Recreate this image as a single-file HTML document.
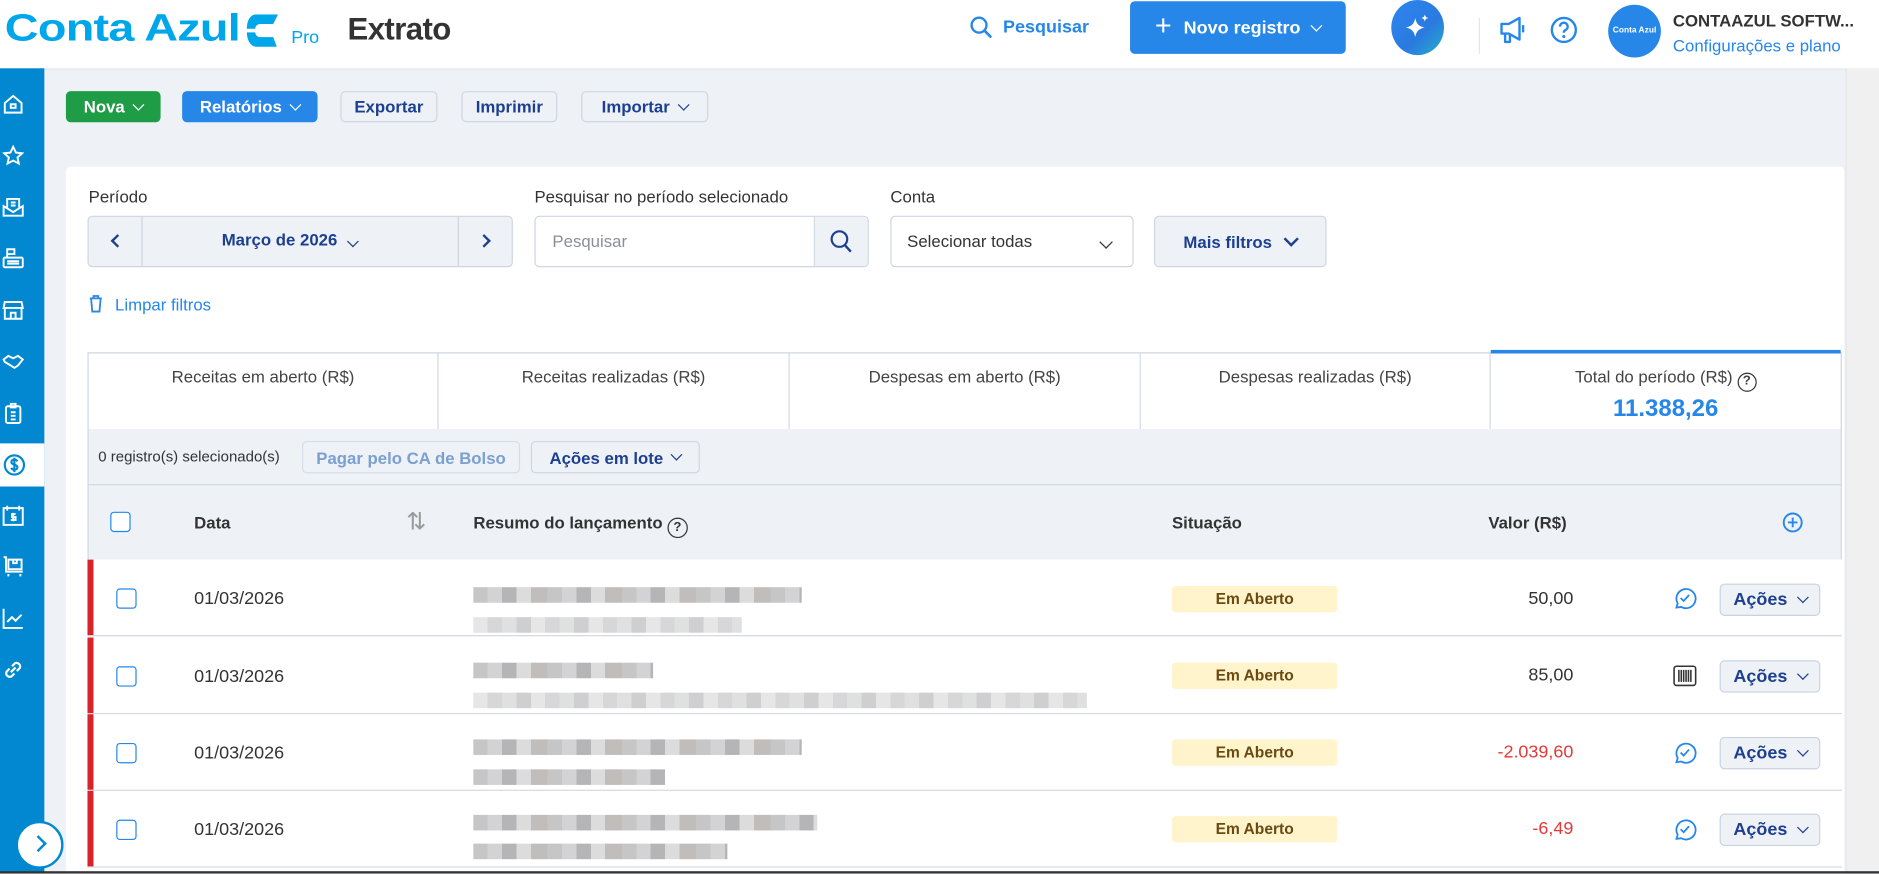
<!DOCTYPE html>
<html><head><meta charset="utf-8"><style>
*{box-sizing:border-box;margin:0;padding:0}
html,body{width:1879px;height:873px;overflow:hidden;background:#eef2f7}
#s{position:absolute;left:0;top:0;width:1568px;height:729px;transform:scale(1.19834);transform-origin:0 0;font-family:"Liberation Sans",sans-serif;background:#eef2f7;color:#333;overflow:hidden}
.a{position:absolute}
.btn{position:absolute;height:26px;border-radius:4px;font-size:14px;font-weight:bold;display:flex;align-items:center;justify-content:center;gap:8px}
.ol{border:1px solid #cfd6e0;background:#eef2f7;color:#1d3f8f}
.chev{display:inline-block;width:7px;height:7px;border-right:1.6px solid currentColor;border-bottom:1.6px solid currentColor;transform:rotate(45deg);margin-top:-4px}
.lbl{font-size:14px;color:#333}
.cb{position:absolute;width:17px;height:17px;border:1.5px solid #2687e9;border-radius:3px;background:#fff}
.row{position:absolute;left:73px;width:1464px;height:64px;background:#fff;border-bottom:1px solid #d0d8e2}
.row .bar{position:absolute;left:0;top:0;width:5px;height:100%;background:#d8232a}
.row .dt{position:absolute;left:89px;top:24px;font-size:15px;color:#333}
.badge{position:absolute;left:905px;width:138px;height:22px;background:#fff4cc;border-radius:3px;font-size:13px;font-weight:bold;color:#6b4a12;text-align:center;line-height:22px}
.val{position:absolute;right:224px;font-size:15px;color:#333}
.acoes{position:absolute;left:1362px;width:84px;height:27px;border:1px solid #c9d3e0;background:#eef2f7;border-radius:4px;color:#1d3f8f;font-size:15px;font-weight:bold;display:flex;align-items:center;justify-content:center;gap:9px}
.blur{position:absolute;height:13px;background:repeating-linear-gradient(90deg,#c6c6c6 0 12px,#d3d3d5 12px 24px,#b5b5b8 24px 36px,#dcdcdc 36px 48px,#c0bdbb 48px 62px)}
.blur.l{background:repeating-linear-gradient(90deg,#e6e6e6 0 12px,#d7d7d9 12px 24px,#dfe0e0 24px 36px,#cfcfd2 36px 48px)}
.sum{position:absolute;top:295px;height:63px;width:292px;border-right:1px solid #d0d8e2;text-align:center;font-size:14px;color:#444;padding-top:11px;background:#fff}
.sb svg{position:absolute;left:2px}
</style></head><body><div id="s">
<!-- header -->
<div class="a" style="left:0;top:0;width:1568px;height:57px;background:#fff;box-shadow:0 1px 2px rgba(0,0,0,.06)"></div>
<div class="a" style="left:4px;top:5px;font-size:32px;font-weight:bold;color:#00a6ea;letter-spacing:-0.5px;transform:scaleX(1.22);transform-origin:0 0">Conta Azul</div>
<svg class="a" style="left:204px;top:12px" width="32" height="28" viewBox="0 0 32 28"><path d="M10 0h18l-4 8H13a4 4 0 0 0-4 4v0H2C2 5 5 0 10 0z" fill="#00a6ea"/><path d="M2 15h7a4 4 0 0 0 4 4h11l3 8H10C5 27 2 21 2 15z" fill="#00a6ea"/></svg>
<div class="a" style="left:243px;top:23px;font-size:15px;color:#00a6ea">Pro</div>
<div class="a" style="left:290px;top:9px;font-size:26px;color:#333;font-weight:bold;letter-spacing:-.5px">Extrato</div>
<svg class="a" style="left:809px;top:13px" width="20" height="20" viewBox="0 0 20 20"><circle cx="8" cy="8" r="6.2" fill="none" stroke="#2687e9" stroke-width="2"/><path d="M12.5 12.5l5 5" stroke="#2687e9" stroke-width="2.2" stroke-linecap="round"/></svg>
<div class="a" style="left:837px;top:14px;font-size:15px;font-weight:bold;color:#2687e9">Pesquisar</div>
<div class="btn" style="left:943px;top:1px;width:180px;height:44px;background:#2687e9;color:#fff;font-size:15px;gap:10px"><span style="font-size:24px;font-weight:normal;margin-top:-3px">+</span>Novo registro <span class="chev"></span></div>
<div class="a" style="left:1161px;top:0;width:44px;height:46px;border-radius:50%;background:linear-gradient(135deg,#2d86ee,#2a7ae0 60%,#27b0c8)"></div>
<svg class="a" style="left:1170px;top:10px" width="26" height="26" viewBox="0 0 26 26"><path d="M11 5c1 5 3 7 8 8-5 1-7 3-8 8-1-5-3-7-8-8 5-1 7-3 8-8z" fill="#fff"/><path d="M19 2c.5 2 1 2.5 3 3-2 .5-2.5 1-3 3-.5-2-1-2.5-3-3 2-.5 2.5-1 3-3z" fill="#fff"/></svg>
<div class="a" style="left:1234px;top:15px;width:1px;height:30px;background:#e2e6ec"></div>
<svg class="a" style="left:1250px;top:13px" width="26" height="24" viewBox="0 0 26 24"><path d="M3 7h6l9-5v18l-9-5H3z M6 15v7h4v-7" fill="none" stroke="#2687e9" stroke-width="2" stroke-linejoin="round"/><path d="M21 8v6" stroke="#2687e9" stroke-width="2"/></svg>
<svg class="a" style="left:1293px;top:13px" width="24" height="24" viewBox="0 0 24 24"><circle cx="12" cy="12" r="10" fill="none" stroke="#2687e9" stroke-width="2"/><path d="M8.8 9.2a3.2 3.2 0 1 1 4.5 2.9c-1 .5-1.3 1-1.3 2.2" fill="none" stroke="#2687e9" stroke-width="2"/><circle cx="12" cy="17.5" r="1.3" fill="#2687e9"/></svg>
<div class="a" style="left:1342px;top:4px;width:44px;height:44px;border-radius:50%;background:#2687e9;color:#fff;font-size:7px;font-weight:bold;text-align:center;line-height:44px">Conta Azul</div>
<div class="a" style="left:1396px;top:9px;font-size:14px;font-weight:bold;color:#333">CONTAAZUL SOFTW...</div>
<div class="a" style="left:1396px;top:30px;font-size:14px;color:#2687e9">Configurações e plano</div>
<!-- right scroll strip -->
<div class="a" style="left:1540px;top:57px;width:28px;height:672px;background:#f0f0f0;border-left:1px solid #e6e6e6"></div>
<!-- sidebar -->
<div class="a sb" style="left:0;top:57px;width:37px;height:672px;background:#0288d1">
<div class="a" style="left:0;top:313px;width:37px;height:36px;background:#fff"></div>
<svg style="top:21px" width="18" height="18" viewBox="0 0 18 18" fill="none" stroke="#fff" stroke-width="1.6"><path d="M2 8l7-6 7 6v8H2z"/><rect x="7" y="9" width="4" height="3"/></svg>
<svg style="top:64px" width="18" height="18" viewBox="0 0 18 18" fill="none" stroke="#fff" stroke-width="1.6"><path d="M9 1.5l2.3 4.8 5.2.6-3.9 3.5 1.1 5.1L9 13l-4.7 2.5 1.1-5.1L1.5 6.9l5.2-.6z"/></svg>
<svg style="top:107px" width="18" height="18" viewBox="0 0 18 18" fill="none" stroke="#fff" stroke-width="1.6"><path d="M1 8v8h16V8l-8 5z M4 9V2h10v7 M7 5h4M7 7.5h4"/></svg>
<svg style="top:150px" width="18" height="18" viewBox="0 0 18 18" fill="none" stroke="#fff" stroke-width="1.6"><rect x="1" y="8" width="16" height="8" rx="1"/><path d="M4 8V5h6V1H4v4 M4 11h10M4 13h10"/></svg>
<svg style="top:193px" width="18" height="18" viewBox="0 0 18 18" fill="none" stroke="#fff" stroke-width="1.6"><path d="M2 2h14l1 5H1z M2 7v9h14V7 M7 16v-5h4v5"/></svg>
<svg style="top:236px" width="18" height="18" viewBox="0 0 18 18" fill="none" stroke="#fff" stroke-width="1.6"><path d="M1 7l4-3 4 2 4-2 4 3-4 5-3 2-3-2-5-3z"/></svg>
<svg style="top:279px" width="18" height="18" viewBox="0 0 18 18" fill="none" stroke="#fff" stroke-width="1.6"><rect x="3" y="3" width="12" height="14" rx="1.5"/><path d="M7 1h4v3H7zM7 8h4M7 11h4M7 14h4"/></svg>
<svg style="top:321px" width="20" height="20" viewBox="0 0 20 20" fill="none" stroke="#0288d1" stroke-width="1.8"><circle cx="10" cy="10" r="8"/><path d="M12.5 7c-.5-1-1.5-1.5-2.5-1.5-1.5 0-2.5.8-2.5 2 0 2.8 5 1.5 5 4.5 0 1.2-1 2-2.5 2-1.2 0-2.2-.6-2.6-1.6M10 4v12"/></svg>
<svg style="top:364px" width="18" height="18" viewBox="0 0 18 18" fill="none" stroke="#fff" stroke-width="1.6"><rect x="1" y="3" width="16" height="14"/><path d="M4 1v4M14 1v4M11 8H8v2.5h3V13H7M9 7v7"/></svg>
<svg style="top:407px" width="18" height="18" viewBox="0 0 18 18" fill="none" stroke="#fff" stroke-width="1.6"><path d="M1 1h2v12h14 M5 3h11v8H5z M5 15v2M15 15v2 M9 3v3h3V3"/></svg>
<svg style="top:450px" width="18" height="18" viewBox="0 0 18 18" fill="none" stroke="#fff" stroke-width="1.6"><path d="M1 1v16h16 M4 12l4-4 3 3 5-5"/></svg>
<svg style="top:493px" width="18" height="18" viewBox="0 0 18 18" fill="none" stroke="#fff" stroke-width="1.8"><path d="M7 11l4-4 M6 8L3.5 10.5a3 3 0 0 0 4 4L10 12 M12 10l2.5-2.5a3 3 0 0 0-4-4L8 6"/></svg>
</div>
<div class="a" style="left:13px;top:685px;width:40px;height:40px;border-radius:50%;background:#fff;border:2px solid #0288d1"></div>
<div class="a" style="left:27px;top:699px;width:10px;height:10px;border-right:2px solid #0288d1;border-top:2px solid #0288d1;transform:rotate(45deg)"></div>
<!-- toolbar -->
<div class="btn" style="left:55px;top:76px;width:79px;background:#1e9c46;color:#fff">Nova <span class="chev"></span></div>
<div class="btn" style="left:152px;top:76px;width:113px;background:#2687e9;color:#fff">Relatórios <span class="chev"></span></div>
<div class="btn ol" style="left:284px;top:76px;width:81px">Exportar</div>
<div class="btn ol" style="left:385px;top:76px;width:80px">Imprimir</div>
<div class="btn ol" style="left:485px;top:76px;width:106px">Importar <span class="chev"></span></div>
<!-- card -->
<div class="a" style="left:55px;top:139px;width:1484px;height:600px;background:#fff;border-radius:4px"></div>
<div class="a lbl" style="left:74px;top:156px">Período</div>
<div class="a" style="left:73px;top:180px;width:355px;height:43px;border:1px solid #cfd6e0;border-radius:4px;background:#eef2f7"></div>
<div class="a" style="left:118px;top:181px;width:1px;height:41px;background:#cfd6e0"></div>
<div class="a" style="left:382px;top:181px;width:1px;height:41px;background:#cfd6e0"></div>
<div class="a" style="left:94px;top:197px;width:8px;height:8px;border-left:2px solid #1d3f8f;border-bottom:2px solid #1d3f8f;transform:rotate(45deg)"></div>
<div class="a" style="left:400px;top:197px;width:8px;height:8px;border-right:2px solid #1d3f8f;border-top:2px solid #1d3f8f;transform:rotate(45deg)"></div>
<div class="a" style="left:185px;top:192px;font-size:14px;font-weight:bold;color:#1d3f8f">Março de 2026 <span class="chev" style="margin-left:6px"></span></div>
<div class="a lbl" style="left:446px;top:156px">Pesquisar no período selecionado</div>
<div class="a" style="left:446px;top:180px;width:279px;height:43px;border:1px solid #cfd6e0;border-radius:4px;background:#fff"></div>
<div class="a" style="left:679px;top:181px;width:45px;height:41px;background:#eef2f7;border-left:1px solid #cfd6e0;border-radius:0 4px 4px 0"></div>
<svg class="a" style="left:692px;top:191px" width="20" height="21" viewBox="0 0 20 21"><circle cx="8.5" cy="8.5" r="6.5" fill="none" stroke="#1d3f8f" stroke-width="1.8"/><path d="M13 13.5l5 5.5" stroke="#1d3f8f" stroke-width="2"/></svg>
<div class="a" style="left:461px;top:193px;font-size:14px;color:#8a8f98">Pesquisar</div>
<div class="a lbl" style="left:743px;top:156px">Conta</div>
<div class="a" style="left:743px;top:180px;width:203px;height:43px;border:1px solid #cfd6e0;border-radius:4px;background:#fff"></div>
<div class="a" style="left:757px;top:193px;font-size:14px;color:#333">Selecionar todas</div>
<div class="a" style="left:919px;top:193px;color:#333"><span class="chev" style="width:8px;height:8px"></span></div>
<div class="btn ol" style="left:963px;top:180px;width:144px;height:43px;font-size:14px;gap:12px">Mais filtros <span class="chev" style="width:9px;height:9px;border-width:2px"></span></div>
<svg class="a" style="left:74px;top:246px" width="12" height="15" viewBox="0 0 12 15" fill="none" stroke="#2687e9" stroke-width="1.5"><path d="M1 3h10M4 3V1h4v2M2 3l1 11h6l1-11"/></svg>
<div class="a" style="left:96px;top:246px;font-size:14px;color:#2687e9">Limpar filtros</div>
<!-- summary -->
<div class="a" style="left:73px;top:294px;width:1464px;height:65px;border:1px solid #d0d8e2;background:#d0d8e2"></div>
<div class="sum" style="left:74px">Receitas em aberto (R$)</div>
<div class="sum" style="left:366px;width:293px">Receitas realizadas (R$)</div>
<div class="sum" style="left:659px;width:293px">Despesas em aberto (R$)</div>
<div class="sum" style="left:952px;width:292px">Despesas realizadas (R$)</div>
<div class="sum" style="left:1244px;width:292px;border-right:none;border-top:3px solid #2687e9;top:292px;height:66px;padding-top:11px">Total do período (R$) <span style="display:inline-block;width:16px;height:16px;border:1.6px solid #333;border-radius:50%;font-size:11px;font-weight:bold;line-height:13px;vertical-align:-2px">?</span><div style="font-size:20px;font-weight:bold;color:#2687e9;margin-top:3px">11.388,26</div></div>
<!-- action bar -->
<div class="a" style="left:73px;top:358px;width:1464px;height:109px;background:#eef2f7;border-left:1px solid #d0d8e2;border-right:1px solid #d0d8e2"></div>
<div class="a" style="left:73px;top:404px;width:1464px;height:1px;background:#d0d8e2"></div>
<div class="a" style="left:82px;top:374px;font-size:12.5px;color:#333">0 registro(s) selecionado(s)</div>
<div class="btn" style="left:252px;top:368px;width:182px;height:27px;border:1px solid #d6dde7;color:#7a9fd0;font-size:14px;background:#eef2f7">Pagar pelo CA de Bolso</div>
<div class="btn ol" style="left:443px;top:368px;width:141px;height:27px;font-size:14px">Ações em lote <span class="chev"></span></div>
<!-- table header -->
<div class="cb" style="left:92px;top:427px"></div>
<div class="a" style="left:162px;top:428px;font-size:14px;font-weight:bold;color:#333">Data</div>
<div class="a" style="left:339px;top:423px;font-size:20px;color:#999">⇅</div>
<div class="a" style="left:395px;top:428px;font-size:14px;font-weight:bold;color:#333">Resumo do lançamento <span style="display:inline-block;width:17px;height:17px;border:1.6px solid #333;border-radius:50%;font-size:11px;text-align:center;line-height:14px;vertical-align:-2px">?</span></div>
<div class="a" style="left:978px;top:428px;font-size:14px;font-weight:bold;color:#333">Situação</div>
<div class="a" style="left:1242px;top:428px;font-size:14px;font-weight:bold;color:#333">Valor (R$)</div>
<svg class="a" style="left:1487px;top:427px" width="18" height="18" viewBox="0 0 18 18" fill="none" stroke="#2687e9" stroke-width="1.6"><circle cx="9" cy="9" r="7.5"/><path d="M9 5v8M5 9h8"/></svg>
<!-- rows -->
<div class="row" style="top:467px"><div class="bar"></div><div class="cb" style="left:24px;top:24px"></div><div class="dt">01/03/2026</div>
<div class="blur" style="left:322px;top:23px;width:274px"></div><div class="blur l" style="left:322px;top:48px;width:224px"></div>
<div class="badge" style="top:22px">Em Aberto</div><div class="val" style="top:24px">50,00</div>
<svg class="a" style="left:1323px;top:22px" width="20" height="20" viewBox="0 0 20 20" fill="none" stroke="#2687e9" stroke-width="1.5"><path d="M3 18l1-3.5A8 8 0 1 1 7 17.5z"/><path d="M6.5 10l2.5 2.5 4.5-5"/></svg>
<div class="acoes" style="top:20px">Ações <span class="chev"></span></div></div>
<div class="row" style="top:532px"><div class="bar"></div><div class="cb" style="left:24px;top:24px"></div><div class="dt">01/03/2026</div>
<div class="blur" style="left:322px;top:21px;width:150px"></div><div class="blur l" style="left:322px;top:46px;width:512px"></div>
<div class="badge" style="top:21px">Em Aberto</div><div class="val" style="top:23px">85,00</div>
<svg class="a" style="left:1323px;top:23px" width="20" height="18" viewBox="0 0 20 18" fill="none" stroke="#333" stroke-width="1.3"><rect x="1" y="1" width="18" height="16" rx="2"/><path d="M5 4v10M7 4v10M9 4v10M11 4v10M13 4v10M15 4v10"/></svg>
<div class="acoes" style="top:19px">Ações <span class="chev"></span></div></div>
<div class="row" style="top:596px"><div class="bar"></div><div class="cb" style="left:24px;top:24px"></div><div class="dt">01/03/2026</div>
<div class="blur" style="left:322px;top:21px;width:274px"></div><div class="blur" style="left:322px;top:46px;width:160px"></div>
<div class="badge" style="top:21px">Em Aberto</div><div class="val" style="top:23px;color:#e53935">-2.039,60</div>
<svg class="a" style="left:1323px;top:22px" width="20" height="20" viewBox="0 0 20 20" fill="none" stroke="#2687e9" stroke-width="1.5"><path d="M3 18l1-3.5A8 8 0 1 1 7 17.5z"/><path d="M6.5 10l2.5 2.5 4.5-5"/></svg>
<div class="acoes" style="top:19px">Ações <span class="chev"></span></div></div>
<div class="row" style="top:660px"><div class="bar"></div><div class="cb" style="left:24px;top:24px"></div><div class="dt">01/03/2026</div>
<div class="blur" style="left:322px;top:20px;width:287px"></div><div class="blur" style="left:322px;top:44px;width:212px"></div>
<div class="badge" style="top:21px">Em Aberto</div><div class="val" style="top:23px;color:#e53935">-6,49</div>
<svg class="a" style="left:1323px;top:22px" width="20" height="20" viewBox="0 0 20 20" fill="none" stroke="#2687e9" stroke-width="1.5"><path d="M3 18l1-3.5A8 8 0 1 1 7 17.5z"/><path d="M6.5 10l2.5 2.5 4.5-5"/></svg>
<div class="acoes" style="top:19px">Ações <span class="chev"></span></div></div>
<div class="a" style="left:0;top:727px;width:1568px;height:2px;background:#333"></div>
</div></body></html>
